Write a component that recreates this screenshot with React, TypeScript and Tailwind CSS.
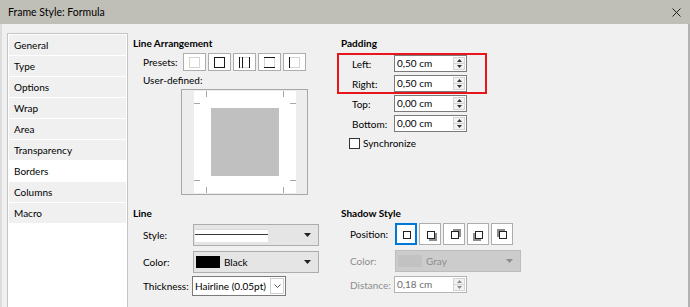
import React from 'react';

const tabs = ['General', 'Type', 'Options', 'Wrap', 'Area', 'Transparency', 'Borders', 'Columns', 'Macro'];

const Tri = ({ up, color = '#333' }: { up?: boolean; color?: string }) => (
  <svg width="5" height="3" viewBox="0 0 5 3">
    <path d={up ? 'M0 3 L2.5 0 L5 3Z' : 'M0 0 L5 0 L2.5 3Z'} fill={color} />
  </svg>
);

function SpinField({ value, muted }: { value: string; muted?: boolean }) {
  return (
    <div className={`w-[73px] h-[17px] flex items-stretch bg-white border ${muted ? 'border-[#b4b4b4]' : 'border-[#7a7a7a]'}`}>
      <span className={`flex-1 pl-[2px] leading-[15px] ${muted ? 'text-[#6d6d6d]' : 'text-black'}`}>{value}</span>
      <div className="w-[12px] my-px mr-px flex flex-col border border-[#d4d4d4] bg-[#f2f2f2]">
        <div className="flex-1 flex items-center justify-center border-b border-[#d4d4d4]">
          <Tri up color={muted ? '#888' : '#333'} />
        </div>
        <div className="flex-1 flex items-center justify-center">
          <Tri color={muted ? '#888' : '#333'} />
        </div>
      </div>
    </div>
  );
}

function PresetIcon({ kind }: { kind: number }) {
  const dot = '#a8a8a8';
  const solid = '#1a1a1a';
  return (
    <svg width="11" height="11" viewBox="0 0 11 11">
      <rect x="0.5" y="0.5" width="10" height="10" fill="none" stroke={dot} strokeDasharray="1 1" />
      {kind === 1 && <rect x="0.5" y="0.5" width="10" height="10" fill="none" stroke={solid} />}
      {kind === 2 && (
        <>
          <line x1="0.5" y1="0" x2="0.5" y2="11" stroke={solid} />
          <line x1="10.5" y1="0" x2="10.5" y2="11" stroke={solid} />
          <line x1="3.5" y1="0" x2="3.5" y2="11" stroke={solid} />
        </>
      )}
      {kind === 3 && (
        <>
          <line x1="0" y1="0.5" x2="11" y2="0.5" stroke={solid} />
          <line x1="0" y1="10.5" x2="11" y2="10.5" stroke={solid} />
        </>
      )}
      {kind === 4 && <line x1="0.5" y1="0" x2="0.5" y2="11" stroke={solid} />}
    </svg>
  );
}

function ShadowIcon({ dx, dy }: { dx: number; dy: number }) {
  return (
    <svg width="13" height="13" viewBox="0 0 13 13">
      {(dx !== 0 || dy !== 0) && <rect x={3 + dx} y={3 + dy} width="8" height="8" fill="#8c8c8c" />}
      <rect x="3.5" y="3.5" width="7" height="7" fill="#fff" stroke="#222" />
    </svg>
  );
}

function Preview() {
  const t = '#a6a6a6';
  return (
    <svg width="102" height="102" viewBox="0 0 102 102">
      <rect width="102" height="102" fill="#fff" />
      <rect x="17" y="17" width="68" height="68" fill="#c0c0c0" />
      <line x1="12.5" y1="0" x2="12.5" y2="6" stroke={t} />
      <line x1="89.5" y1="0" x2="89.5" y2="6" stroke={t} />
      <line x1="0" y1="12.5" x2="6" y2="12.5" stroke={t} />
      <line x1="96" y1="12.5" x2="102" y2="12.5" stroke={t} />
      <line x1="0" y1="89.5" x2="6" y2="89.5" stroke={t} />
      <line x1="96" y1="89.5" x2="102" y2="89.5" stroke={t} />
      <line x1="12.5" y1="96" x2="12.5" y2="102" stroke={t} />
      <line x1="89.5" y1="96" x2="89.5" y2="102" stroke={t} />
    </svg>
  );
}

export default function App() {
  const font = { fontFamily: 'Lato, "Liberation Sans", sans-serif' };
  return (
    <div className="relative w-[690px] h-[307px] overflow-hidden bg-[#f0f0f0] text-[10px] leading-[14px] text-black" style={font}>
      {/* title bar */}
      <div className="h-[24px] bg-[#c0bfb7] flex items-center justify-between pl-[8px] pr-[8px]">
        <span className="text-[10.5px]">Frame Style: Formula</span>
        <svg width="9" height="9" viewBox="0 0 9 9" className="mr-[1px]">
          <path d="M0.5 0.5 L8.5 8.5 M8.5 0.5 L0.5 8.5" stroke="#222" strokeWidth="1" />
        </svg>
      </div>

      <div className="flex h-[283px] border-l-2 border-r-2 border-l-[#dcdcdc] border-r-[#b2b2b2] pl-[5px]">
        {/* tab list */}
        <div className="w-[121px] mt-[9px] h-[300px] bg-white border border-[#c4c4c4] p-px flex flex-col gap-px">
          {tabs.map((t) => (
            <div key={t} className={`h-[20px] pl-[5px] flex items-center ${t === 'Borders' ? 'bg-white' : 'bg-[#f0f0f0]'}`}>
              {t}
            </div>
          ))}
        </div>

        <div className="ml-[5px] flex-1 flex flex-col pt-[12px]">
          {/* top section */}
          <div className="flex">
            <div className="w-[208px] flex flex-col">
              <div className="font-bold">Line Arrangement</div>
              <div className="flex items-center mt-[3px] pl-[10px]">
                <span className="w-[40px]">Presets:</span>
                <div className="flex gap-[2px]">
                  {[0, 1, 2, 3, 4].map((k) => (
                    <div key={k} className="w-[23px] h-[18px] bg-white border border-[#adadad] flex items-center justify-center">
                      <PresetIcon kind={k} />
                    </div>
                  ))}
                </div>
              </div>
              <div className="mt-[2px] pl-[10px]">User-defined:</div>
              <div className="mt-[2px] ml-[48px] w-[127px] h-[106px] border border-[#a8a8a8] bg-[#ededed] pt-px pl-[12px]">
                <Preview />
              </div>
            </div>

            <div className="flex-1 flex flex-col">
              <div className="font-bold">Padding</div>
              <div className="mt-[5px] flex flex-col gap-[3px]">
                {[
                  ['Left:', '0,50 cm'],
                  ['Right:', '0,50 cm'],
                  ['Top:', '0,00 cm'],
                  ['Bottom:', '0,00 cm'],
                ].map(([l, v]) => (
                  <div key={l} className="flex items-center pl-[11px]">
                    <span className="w-[42px]">{l}</span>
                    <SpinField value={v} />
                  </div>
                ))}
              </div>
              <div className="mt-[4px] pl-[8px] flex items-center">
                <div className="w-[11px] h-[11px] bg-white border border-[#333]" />
                <span className="ml-[3px]">Synchronize</span>
              </div>
            </div>
          </div>

          {/* bottom section */}
          <div className="flex mt-[11px]">
            <div className="w-[208px] flex flex-col">
              <div className="font-bold">Line</div>
              <div className="flex items-center pl-[10px] mt-[4px]">
                <span className="w-[50px]">Style:</span>
                <div className="w-[126px] h-[22px] bg-[#e5e5e5] border border-[#adadad] flex items-center pl-[1px] pr-[7px]">
                  <div className="w-[73px] h-[13px] bg-white border-t border-[#d8d8d8] flex items-center">
                    <div className="w-full h-px bg-[#3a3a3a] mt-[-2px]" />
                  </div>
                  <div className="flex-1" />
                  <svg width="7" height="4" viewBox="0 0 7 4"><path d="M0 0 L7 0 L3.5 4Z" fill="#222" /></svg>
                </div>
              </div>
              <div className="flex items-center pl-[10px] mt-[5px]">
                <span className="w-[50px]">Color:</span>
                <div className="w-[126px] h-[22px] bg-[#e5e5e5] border border-[#adadad] flex items-center pl-[2px] pr-[7px]">
                  <div className="w-[24px] h-[12px] bg-black" />
                  <span className="ml-[4px] flex-1">Black</span>
                  <svg width="7" height="4" viewBox="0 0 7 4"><path d="M0 0 L7 0 L3.5 4Z" fill="#222" /></svg>
                </div>
              </div>
              <div className="flex items-center pl-[10px] mt-[3px]">
                <span className="w-[49px]">Thickness:</span>
                <div className="w-[94px] h-[20px] bg-white border border-[#7a7a7a] flex items-stretch">
                  <span className="flex-1 pl-[2px] leading-[18px]">Hairline (0.05pt)</span>
                  <div className="w-[14px] my-px mr-px border border-[#d0d0d0] flex items-center justify-center">
                    <svg width="7" height="4" viewBox="0 0 7 4"><path d="M0.5 0.5 L3.5 3.5 L6.5 0.5" fill="none" stroke="#555" /></svg>
                  </div>
                </div>
              </div>
            </div>

            <div className="flex-1 flex flex-col">
              <div className="font-bold">Shadow Style</div>
              <div className="flex items-center pl-[9px] mt-[3px]">
                <span className="w-[45px]">Position:</span>
                <div className="flex gap-[2px]">
                  {[
                    [0, 0],
                    [2, 2],
                    [2, -2],
                    [-2, 2],
                    [-2, -2],
                  ].map(([dx, dy], i) => (
                    <div
                      key={i}
                      className={`w-[22px] h-[22px] bg-white flex items-center justify-center ${i === 0 ? 'border-2 border-[#0078d7]' : 'border border-[#adadad]'}`}
                    >
                      <ShadowIcon dx={dx} dy={dy} />
                    </div>
                  ))}
                </div>
              </div>
              <div className="flex items-center pl-[9px] mt-[5px] text-[#8d8d8d]">
                <span className="w-[45px]">Color:</span>
                <div className="w-[126px] h-[22px] bg-[#cccccc] border border-[#bdbdbd] flex items-center pl-[2px] pr-[7px]">
                  <div className="w-[24px] h-[12px] bg-[#c2c2c2]" />
                  <span className="ml-[4px] flex-1">Gray</span>
                  <svg width="7" height="4" viewBox="0 0 7 4"><path d="M0 0 L7 0 L3.5 4Z" fill="#8d8d8d" /></svg>
                </div>
              </div>
              <div className="flex items-center pl-[9px] mt-[4px] text-[#8d8d8d]">
                <span className="w-[44px]">Distance:</span>
                <SpinField value="0,18 cm" muted />
              </div>
            </div>
          </div>
        </div>
      </div>

      {/* red highlight */}
      <div className="absolute left-[337px] top-[53px] w-[150px] h-[41px] border-2 border-[#e8161b] pointer-events-none" />
    </div>
  );
}
